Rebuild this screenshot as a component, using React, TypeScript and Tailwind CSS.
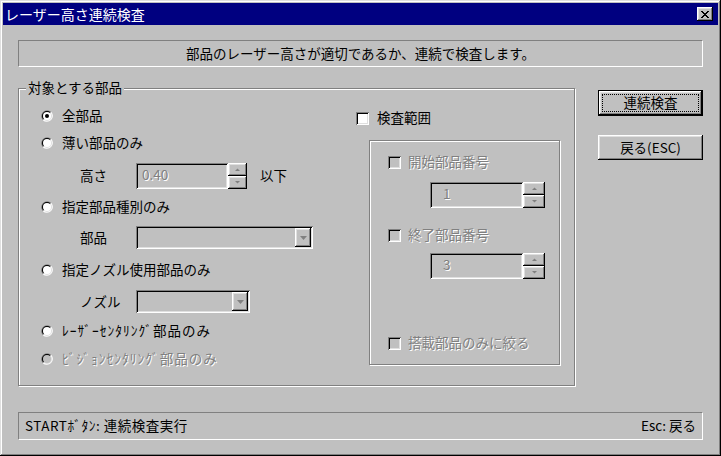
import React from "react";

const RAISED =
  "shadow-[inset_-1px_-1px_0_#000,inset_1px_1px_0_#fff,inset_-2px_-2px_0_#808080,inset_2px_2px_0_#dfdfdf]";
const SUNKEN =
  "shadow-[inset_1px_1px_0_#808080,inset_-1px_-1px_0_#fff,inset_2px_2px_0_#000,inset_-2px_-2px_0_#dfdfdf]";
const DISABLED = "text-[#808080] [text-shadow:1px_1px_0_#fff]";

function Radio({ checked = false, disabled = false }: { checked?: boolean; disabled?: boolean }) {
  return (
    <svg width="12" height="12" viewBox="0 0 12 12" className="shrink-0">
      <path d="M1.76 10.24 A6 6 0 0 1 10.24 1.76 Z" fill="#808080" />
      <path d="M10.24 1.76 A6 6 0 0 1 1.76 10.24 Z" fill="#fff" />
      <path d="M2.46 9.54 A5 5 0 0 1 9.54 2.46 Z" fill="#000" />
      <path d="M9.54 2.46 A5 5 0 0 1 2.46 9.54 Z" fill="#dfdfdf" />
      <circle cx="6" cy="6" r="4" fill={disabled ? "#c0c0c0" : "#fff"} />
      {checked && <circle cx="6" cy="6" r="2" fill="#000" />}
    </svg>
  );
}

function Check({ disabled = false }: { disabled?: boolean }) {
  return (
    <div className={`w-[13px] h-[13px] shrink-0 ${SUNKEN} ${disabled ? "bg-[#c0c0c0]" : "bg-white"}`} />
  );
}

function RadioRow({
  label,
  checked,
  disabled,
  narrow,
  mt,
}: {
  label: string;
  checked?: boolean;
  disabled?: boolean;
  narrow?: boolean;
  mt: string;
}) {
  return (
    <div className={`${mt} h-[16px] pl-[22px] flex items-center gap-[9px]`}>
      <Radio checked={checked} disabled={disabled} />
      <span className={`${disabled ? DISABLED : ""} ${narrow ? "tracking-[1px]" : ""}`}>{label}</span>
    </div>
  );
}

function Arrow({ up }: { up?: boolean }) {
  return (
    <svg width="5" height="3" viewBox="0 0 5 3" className="overflow-visible">
      <path d={up ? "M0 3 L5 3 L2.5 0.5 Z" : "M0 0 L5 0 L2.5 2.5 Z"} fill="#808080" />
    </svg>
  );
}

function Spin({
  value,
  field,
  spin,
  h,
  pad = "pl-[6px]",
}: {
  value: string;
  field: string;
  spin: string;
  h: string;
  pad?: string;
}) {
  return (
    <div className={`flex ${h}`}>
      <div className={`${field} h-full ${SUNKEN} bg-[#c0c0c0] ${pad} pt-[5px] ${DISABLED}`}>{value}</div>
      <div className={`${spin} h-full flex flex-col`}>
        <div className={`flex-1 ${RAISED} flex items-center justify-center`}>
          <Arrow up />
        </div>
        <div className={`flex-1 ${RAISED} flex items-center justify-center`}>
          <Arrow />
        </div>
      </div>
    </div>
  );
}

function Combo({ w }: { w: string }) {
  return (
    <div className={`${w} h-[23px] ${SUNKEN} bg-[#c0c0c0] p-[2px] flex justify-end`}>
      <div className={`w-[16px] h-full ${RAISED} flex items-center justify-center`}>
        <svg width="7" height="4" viewBox="0 0 7 4">
          <path d="M0 0 L7 0 L3.5 4 Z" fill="#808080" />
        </svg>
      </div>
    </div>
  );
}

function SubRow({ label, mt, children }: { label: string; mt: string; children: React.ReactNode }) {
  return (
    <div className={`${mt} pl-[61px] flex items-center`}>
      <span className="w-[56px]">{label}</span>
      {children}
    </div>
  );
}

export default function App() {
  return (
    <div
      className={`w-[721px] h-[456px] bg-[#c0c0c0] p-[3px] flex flex-col text-black text-[13.5px] leading-none font-[family-name:'MS_UI_Gothic','Noto_Sans_CJK_JP',sans-serif] shadow-[inset_-1px_-1px_0_#000,inset_1px_1px_0_#dfdfdf,inset_-2px_-2px_0_#808080,inset_2px_2px_0_#fff]`}
    >
      {/* title bar */}
      <div className="h-[22px] bg-[#000080] flex items-center justify-between">
        <span className="pl-[2px] text-white text-[14px]">レーザー高さ連続検査</span>
        <div className={`mr-[5px] w-[16px] h-[14px] bg-[#c0c0c0] ${RAISED} flex items-center justify-center`}>
          <svg width="8" height="7" viewBox="0 0 8 7" shapeRendering="crispEdges">
            <path
              d="M0 0h2v1h-2zM6 0h2v1h-2zM1 1h2v1h-2zM5 1h2v1h-2zM2 2h4v1h-4zM3 3h2v1h-2zM2 4h4v1h-4zM1 5h2v1h-2zM5 5h2v1h-2zM0 6h2v1h-2zM6 6h2v1h-2z"
              fill="#000"
            />
          </svg>
        </div>
      </div>

      <div className="px-[15px] flex flex-col">
        <div className="mt-[15px] h-[27px] border border-t-[#808080] border-l-[#808080] border-b-white border-r-white flex items-center justify-center">
          部品のレーザー高さが適切であるか、連続で検査します。
        </div>

        <div className="mt-[21px] flex">
          {/* group box */}
          <div className="relative w-[557px] h-[298px] border border-[#808080] shadow-[inset_1px_1px_0_#fff,1px_1px_0_#fff] flex">
            <span className="absolute -top-[9px] left-[7px] px-[2px] h-[16px] flex items-center bg-[#c0c0c0]">
              対象とする部品
            </span>

            <div className="w-[337px] flex flex-col">
              <RadioRow label="全部品" checked mt="mt-[19px]" />
              <RadioRow label="薄い部品のみ" mt="mt-[11px]" />
              <SubRow label="高さ" mt="mt-[12px]">
                <Spin value="0.40" field="w-[92px]" spin="w-[19px]" h="h-[26px]" />
                <span className="ml-[13px]">以下</span>
              </SubRow>
              <RadioRow label="指定部品種別のみ" mt="mt-[10px]" />
              <SubRow label="部品" mt="mt-[11px]">
                <Combo w="w-[177px]" />
              </SubRow>
              <RadioRow label="指定ノズル使用部品のみ" mt="mt-[13px]" />
              <SubRow label="ノズル" mt="mt-[12px]">
                <Combo w="w-[114px]" />
              </SubRow>
              <RadioRow label="ﾚｰｻﾞｰｾﾝﾀﾘﾝｸﾞ部品のみ" narrow mt="mt-[10px]" />
              <RadioRow label="ﾋﾞｼﾞｮﾝｾﾝﾀﾘﾝｸﾞ部品のみ" narrow disabled mt="mt-[12px]" />
            </div>

            <div className="flex flex-col">
              <div className="mt-[21px] h-[16px] flex items-center gap-[8px]">
                <Check />
                <span>検査範囲</span>
              </div>
              <div className="ml-[13px] mt-[14px] w-[191px] h-[225px] border border-[#808080] shadow-[inset_1px_1px_0_#fff,1px_1px_0_#fff] flex flex-col">
                <div className="mt-[13px] pl-[18px] h-[16px] flex items-center gap-[7px]">
                  <Check disabled />
                  <span className={DISABLED}>開始部品番号</span>
                </div>
                <div className="mt-[12px] ml-[60px]">
                  <Spin value="1" field="w-[93px]" spin="w-[22px]" h="h-[26px]" pad="pl-[13px]" />
                </div>
                <div className="mt-[19px] pl-[18px] h-[16px] flex items-center gap-[7px]">
                  <Check disabled />
                  <span className={DISABLED}>終了部品番号</span>
                </div>
                <div className="mt-[10px] ml-[60px]">
                  <Spin value="3" field="w-[93px]" spin="w-[22px]" h="h-[26px]" pad="pl-[13px]" />
                </div>
                <div className="mt-[56px] pl-[18px] h-[16px] flex items-center gap-[7px]">
                  <Check disabled />
                  <span className={DISABLED}>搭載部品のみに絞る</span>
                </div>
              </div>
            </div>
          </div>

          {/* buttons */}
          <div className="ml-[23px] flex flex-col">
            <div className="mt-[2px] w-[105px] h-[26px] border border-black bg-[#c0c0c0] flex">
              <div className={`flex-1 ${RAISED} flex p-[3px]`}>
                <div className="flex-1 border border-dotted border-black flex items-center justify-center">
                  連続検査
                </div>
              </div>
            </div>
            <div className={`mt-[19px] w-[105px] h-[25px] ${RAISED} flex items-center justify-center`}>
              戻る(ESC)
            </div>
          </div>
        </div>

        <div className="mt-[26px] h-[28px] border border-t-[#808080] border-l-[#808080] border-b-white border-r-white flex items-center justify-between px-[6px]">
          <span className="tracking-[0.5px]">STARTﾎﾞﾀﾝ: 連続検査実行</span>
          <span>Esc: 戻る</span>
        </div>
      </div>
    </div>
  );
}
